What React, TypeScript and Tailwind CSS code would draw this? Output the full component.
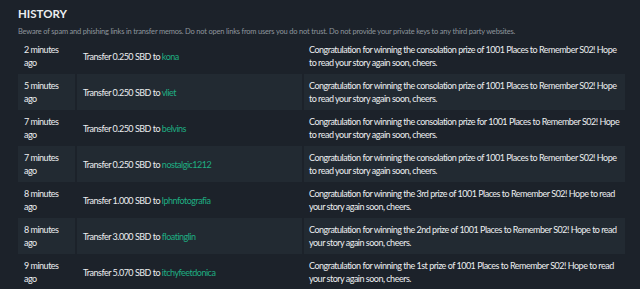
import React from "react";

const rows = [
  { t: "2 minutes ago", amt: "0.250", to: "kona", memo: "Congratulation for winning the consolation prize of 1001 Places to Remember S02! Hope to read your story again soon, cheers." },
  { t: "5 minutes ago", amt: "0.250", to: "vliet", memo: "Congratulation for winning the consolation prize of 1001 Places to Remember S02! Hope to read your story again soon, cheers." },
  { t: "7 minutes ago", amt: "0.250", to: "belvins", memo: "Congratulation for winning the consolation prize for 1001 Places to Remember S02! Hope to read your story again soon, cheers." },
  { t: "7 minutes ago", amt: "0.250", to: "nostalgic1212", memo: "Congratulation for winning the consolation prize of 1001 Places to Remember S02! Hope to read your story again soon, cheers." },
  { t: "8 minutes ago", amt: "1.000", to: "lphnfotografia", memo: "Congratulation for winning the 3rd prize of 1001 Places to Remember S02! Hope to read your story again soon, cheers." },
  { t: "8 minutes ago", amt: "3.000", to: "floatinglin", memo: "Congratulation for winning the 2nd prize of 1001 Places to Remember S02! Hope to read your story again soon, cheers." },
  { t: "9 minutes ago", amt: "5.070", to: "itchyfeetdonica", memo: "Congratulation for winning the 1st prize of 1001 Places to Remember S02! Hope to read your story again soon, cheers." },
];

export default function App() {
  return (
    <div
      className="w-[640px] h-[289px] overflow-hidden bg-[#1c222a] text-[#eceef0] pl-[18px] pt-[7px]"
      style={{ fontFamily: "Lato, 'Noto Sans', sans-serif" }}
    >
      <h1 className="text-[11.5px] leading-[14px] font-bold">HISTORY</h1>
      <p className="text-[7.5px] leading-[12px] mt-[5px] tracking-[-0.2px] text-[#8d959c]">
        Beware of spam and phishing links in transfer memos. Do not open links from users you do not trust. Do not provide your private keys to any third party websites.
      </p>
      <table className="border-collapse text-[9px] leading-[13px] tracking-[-0.5px]">
        <tbody>
          {rows.map((r, i) => (
            <tr key={i} className={i % 2 === 1 ? "bg-[#222a32]" : ""}>
              <td className="w-[58px] h-[36px] pl-[6px] pr-[4px] align-middle">{r.t}</td>
              <td className="w-[227px] h-[36px] pl-[6px] align-middle border-l-2 border-[#1c222a]">
                Transfer {r.amt} SBD to <span className="text-[#1fae82]">{r.to}</span>
              </td>
              <td className="w-[322px] h-[36px] pl-[5px] pr-[4px] align-middle border-l-2 border-[#1c222a]">
                {r.memo}
              </td>
            </tr>
          ))}
        </tbody>
      </table>
    </div>
  );
}
